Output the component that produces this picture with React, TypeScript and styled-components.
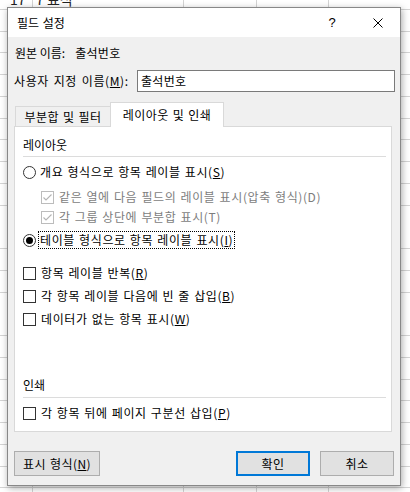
import React from 'react';
import styled, { createGlobalStyle } from 'styled-components';

const GlobalStyle = createGlobalStyle`
  html, body { margin: 0; padding: 0; }
  body {
    font-family: "Noto Sans CJK KR", "Noto Sans", sans-serif;
    font-size: 12px;
    color: #000;
  }
  * { box-sizing: border-box; }
`;

const Sheet = styled.div`
  position: relative;
  width: 410px;
  height: 492px;
  overflow: hidden;
  background-color: #fff;
  background-image:
    linear-gradient(#d4d4d4, #d4d4d4),
    linear-gradient(#d4d4d4, #d4d4d4),
    linear-gradient(#d4d4d4, #d4d4d4),
    linear-gradient(#d4d4d4, #d4d4d4),
    repeating-linear-gradient(to bottom, transparent 0 9px, #d4d4d4 9px 10px, transparent 10px 21.75px);
  background-size: 1px 100%, 1px 100%, 1px 100%, 1px 100%, 100% 100%;
  background-position: 32px 0, 183px 0, 256px 0, 328px 0, 0 0;
  background-repeat: no-repeat;
`;

const CellText = styled.span<{ $left: number }>`
  position: absolute;
  top: -8px;
  left: ${(p) => p.$left}px;
  font-size: 14px;
  line-height: 14px;
  color: #222;
`;

const Dialog = styled.div`
  position: absolute;
  left: 7px;
  top: 7px;
  width: 394px;
  height: 479px;
  border: 1px solid #888;
  background: #f0f0f0;
  box-shadow: 1px 2px 7px rgba(0, 0, 0, 0.35);
  display: flex;
  flex-direction: column;
`;

const TitleBar = styled.div`
  height: 29px;
  background: #fff;
  display: flex;
  align-items: center;
  padding-left: 9px;
`;

const Title = styled.span`
  flex: 1;
  line-height: 16px;
  word-spacing: 1px;
`;

const CaptionButton = styled.div<{ $w: number }>`
  width: ${(p) => p.$w}px;
  height: 29px;
  display: flex;
  align-items: center;
  justify-content: center;
`;

const HelpGlyph = styled.span`
  font-family: "Liberation Sans", Arial, sans-serif;
  font-size: 13px;
  line-height: 13px;
`;

const Body = styled.div`
  flex: 1;
  display: flex;
  flex-direction: column;
  padding: 0 5px 0 6px;
`;

const InfoRow = styled.div`
  margin-top: 8px;
  height: 16px;
  line-height: 16px;
  padding-left: 1px;
  display: flex;
`;

const InfoValue = styled.span`
  margin-left: 10px;
  letter-spacing: 0.3px;
`;

const NameRow = styled.div`
  margin-top: 9px;
  height: 22px;
  display: flex;
  align-items: center;
`;

const NameLabel = styled.span`
  width: 123px;
  padding-left: 0;
  line-height: 16px;
  letter-spacing: 0.6px;
  word-spacing: 1.5px;
  white-space: nowrap;
`;

const TextBox = styled.div`
  flex: 1;
  height: 22px;
  border: 1px solid #7a7a7a;
  background: #fff;
  padding-left: 3px;
  line-height: 20px;
  letter-spacing: 0.3px;
`;

const Mn = styled.u`
  text-decoration: underline;
  text-underline-offset: 1px;
  text-decoration-thickness: 1px;
`;

const TabStrip = styled.div`
  margin-top: 10px;
  height: 24px;
  display: flex;
  align-items: flex-end;
  padding-left: 1px;
  position: relative;
  z-index: 1;
`;

const Tab = styled.div<{ $active?: boolean; $w: number }>`
  width: ${(p) => p.$w}px;
  height: ${(p) => (p.$active ? 25 : 20)}px;
  margin-bottom: ${(p) => (p.$active ? -1 : 0)}px;
  margin-left: ${(p) => (p.$active ? -1 : 0)}px;
  border: 1px solid #d9d9d9;
  border-bottom: none;
  background: ${(p) => (p.$active ? '#fff' : '#f0f0f0')};
  display: flex;
  align-items: center;
  justify-content: center;
  line-height: 16px;
  letter-spacing: 0.4px;
  word-spacing: 1px;
  padding-bottom: ${(p) => (p.$active ? 1 : 0)}px;
`;

const Panel = styled.div`
  height: 306px;
  margin-right: 3px;
  border: 1px solid #d9d9d9;
  background: #fff;
  padding: 0 5px 0 8px;
  display: flex;
  flex-direction: column;
`;

const GroupLabel = styled.div<{ $top: number }>`
  margin-top: ${(p) => p.$top}px;
  height: 20px;
  line-height: 20px;
`;

const Separator = styled.div<{ $top: number }>`
  margin-top: ${(p) => p.$top}px;
  height: 1px;
  background: #dcdcdc;
`;

const OptionRow = styled.div<{ $top: number; $indent?: number }>`
  margin-top: ${(p) => p.$top}px;
  margin-left: ${(p) => p.$indent ?? 0}px;
  height: 20px;
  display: flex;
  align-items: center;
`;

const RadioCircle = styled.span<{ $on?: boolean }>`
  width: 13px;
  height: 13px;
  border-radius: 50%;
  border: 1px solid #333;
  background: #fff;
  display: flex;
  align-items: center;
  justify-content: center;
  flex: none;
  &::after {
    content: '';
    display: ${(p) => (p.$on ? 'block' : 'none')};
    width: 7px;
    height: 7px;
    border-radius: 50%;
    background: #000;
  }
`;

const CheckBox = styled.span<{ $disabled?: boolean }>`
  width: 13px;
  height: 13px;
  border: 1px solid ${(p) => (p.$disabled ? '#bcbcbc' : '#333')};
  background: #fff;
  display: flex;
  align-items: center;
  justify-content: center;
  flex: none;
`;

const OptionText = styled.span<{ $gap: number; $focus?: boolean; $disabled?: boolean }>`
  margin-left: ${(p) => p.$gap}px;
  padding: 0 1px;
  line-height: 16px;
  letter-spacing: 0.6px;
  word-spacing: 0.9px;
  border: 1px ${(p) => (p.$focus ? 'dotted #000' : 'solid transparent')};
  color: ${(p) => (p.$disabled ? '#7d7d7d' : '#000')};
  white-space: nowrap;
`;

const ButtonRow = styled.div`
  margin-top: 19px;
  display: flex;
  gap: 10px;
  padding-right: 1px;
`;

const Spacer = styled.div`
  flex: 1;
`;

const Button = styled.div<{ $w: number; $default?: boolean }>`
  width: ${(p) => p.$w}px;
  height: 25px;
  background: #e1e1e1;
  border: ${(p) => (p.$default ? '2px solid #0078d7' : '1px solid #adadad')};
  display: flex;
  align-items: center;
  justify-content: center;
  line-height: 16px;
  letter-spacing: 0.4px;
  word-spacing: 1px;
`;

const Check = ({ color }: { color: string }) => (
  <svg width="11" height="11" viewBox="0 0 11 11">
    <polyline points="1.5,5.5 4,8 9.5,2.5" fill="none" stroke={color} strokeWidth="1.1" />
  </svg>
);

const Radio = ({ on, focus, children }: { on?: boolean; focus?: boolean; children: React.ReactNode }) => (
  <>
    <RadioCircle $on={on} />
    <OptionText $gap={2} $focus={focus}>
      {children}
    </OptionText>
  </>
);

const CheckOption = ({ checked, disabled, children }: { checked?: boolean; disabled?: boolean; children: React.ReactNode }) => (
  <>
    <CheckBox $disabled={disabled}>{checked && <Check color={disabled ? '#b4b4b4' : '#000'} />}</CheckBox>
    <OptionText $gap={3} $disabled={disabled}>
      {children}
    </OptionText>
  </>
);

export default function App() {
  return (
    <Sheet>
      <GlobalStyle />
      <CellText $left={10}>17</CellText>
      <CellText $left={36}>7 표식</CellText>
      <Dialog>
        <TitleBar>
          <Title>필드 설정</Title>
          <CaptionButton $w={46}>
            <HelpGlyph>?</HelpGlyph>
          </CaptionButton>
          <CaptionButton $w={45}>
            <svg width="10" height="10" viewBox="0 0 10 10">
              <path d="M0.5 0.5 L9.5 9.5 M9.5 0.5 L0.5 9.5" stroke="#000" strokeWidth="1" fill="none" />
            </svg>
          </CaptionButton>
        </TitleBar>
        <Body>
          <InfoRow>
            <span>원본 이름:</span>
            <InfoValue>출석번호</InfoValue>
          </InfoRow>
          <NameRow>
            <NameLabel>
              사용자 지정 이름(<Mn>M</Mn>):
            </NameLabel>
            <TextBox>출석번호</TextBox>
          </NameRow>
          <TabStrip>
            <Tab $w={96}>부분합 및 필터</Tab>
            <Tab $w={114} $active>
              레이아웃 및 인쇄
            </Tab>
          </TabStrip>
          <Panel>
            <GroupLabel $top={8}>레이아웃</GroupLabel>
            <Separator $top={1} />
            <OptionRow $top={5}>
              <Radio>
                개요 형식으로 항목 레이블 표시(<Mn>S</Mn>)
              </Radio>
            </OptionRow>
            <OptionRow $top={5} $indent={18}>
              <CheckOption checked disabled>
                같은 열에 다음 필드의 레이블 표시(압축 형식)(D)
              </CheckOption>
            </OptionRow>
            <OptionRow $top={0} $indent={18}>
              <CheckOption checked disabled>
                각 그룹 상단에 부분합 표시(T)
              </CheckOption>
            </OptionRow>
            <OptionRow $top={3}>
              <Radio on focus>
                테이블 형식으로 항목 레이블 표시(<Mn>I</Mn>)
              </Radio>
            </OptionRow>
            <OptionRow $top={13}>
              <CheckOption>
                항목 레이블 반복(<Mn>R</Mn>)
              </CheckOption>
            </OptionRow>
            <OptionRow $top={3}>
              <CheckOption>
                각 항목 레이블 다음에 빈 줄 삽입(<Mn>B</Mn>)
              </CheckOption>
            </OptionRow>
            <OptionRow $top={3}>
              <CheckOption>
                데이터가 없는 항목 표시(<Mn>W</Mn>)
              </CheckOption>
            </OptionRow>
            <GroupLabel $top={46}>인쇄</GroupLabel>
            <Separator $top={2} />
            <OptionRow $top={5}>
              <CheckOption>
                각 항목 뒤에 페이지 구분선 삽입(<Mn>P</Mn>)
              </CheckOption>
            </OptionRow>
          </Panel>
          <ButtonRow>
            <Button $w={86}>
              표시 형식(<Mn>N</Mn>)
            </Button>
            <Spacer />
            <Button $w={74} $default>
              확인
            </Button>
            <Button $w={74}>취소</Button>
          </ButtonRow>
        </Body>
      </Dialog>
    </Sheet>
  );
}
